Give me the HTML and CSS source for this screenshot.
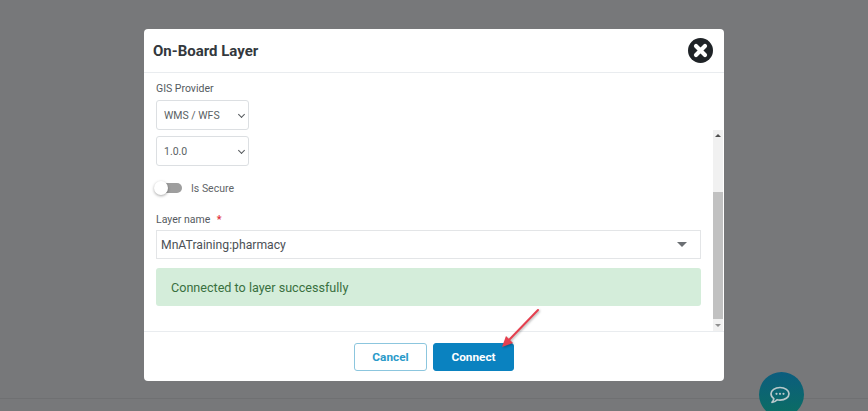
FILE: index.html
```html
<!DOCTYPE html>
<html lang="en">
<head>
  <meta charset="UTF-8">
  <title>On-Board Layer</title>
  <link rel="stylesheet" href="styles.css">
</head>
<body>
  <div class="page-rule"></div>
  <div class="modal">
    <header class="modal-head">
      <h2>On-Board Layer</h2>
      <button class="close" type="button" aria-label="Close">
        <svg width="25" height="25" viewBox="0 0 25 25">
          <circle cx="12.5" cy="12.5" r="12.5" fill="#1f2327"/>
          <path d="M8 8l9 9M17 8l-9 9" stroke="#fff" stroke-width="4.2" stroke-linecap="round"/>
        </svg>
      </button>
    </header>
    <div class="modal-body">
      <label class="field-label">GIS Provider</label>
      <div class="select-wrap">
        <select class="small-select"><option>WMS / WFS</option></select>
      </div>
      <div class="select-wrap">
        <select class="small-select"><option>1.0.0</option></select>
      </div>
      <div class="toggle-row">
        <span class="toggle"></span>
        <span class="toggle-label">Is Secure</span>
      </div>
      <label class="field-label layer-label">Layer name <span class="req">*</span></label>
      <div class="combo">
        <span>MnATraining:pharmacy</span>
        <span class="caret"></span>
      </div>
      <div class="alert">Connected to layer successfully</div>
      <div class="scrollbar">
        <span class="arrow-up"></span>
        <span class="thumb"></span>
        <span class="arrow-down"></span>
      </div>
    </div>
    <footer class="modal-foot">
      <button class="btn btn-cancel" type="button">Cancel</button>
      <button class="btn btn-connect" type="button">Connect</button>
    </footer>
  </div>
  <svg class="pointer" width="44" height="44" viewBox="0 0 44 44">
    <path d="M40 3L11 33" stroke="#e5404f" stroke-width="2" stroke-linecap="round"/>
    <path d="M4 40l4-11 7 7z" fill="#e5404f"/>
  </svg>
  <button class="chat" type="button" aria-label="Chat">
    <svg width="22" height="18" viewBox="0 0 22 18">
      <path d="M11 1.500c5 0 9 2.800 9 6.300s-4 6.300-9 6.300c-1 0-2-.1-2.900-.4C6.800 15.300 5.200 16.300 3 16.300c1-1 1.700-2.200 1.800-3.700C3 11.400 2 9.700 2 7.800 2 4.300 6 1.500 11 1.500z" fill="none" stroke="#b9c8cb" stroke-width="1.700" stroke-linejoin="round"/>
      <circle cx="7.500" cy="7.800" r="1.100" fill="#b9c8cb"/>
      <circle cx="11" cy="7.800" r="1.100" fill="#b9c8cb"/>
      <circle cx="14.500" cy="7.800" r="1.100" fill="#b9c8cb"/>
    </svg>
  </button>
</body>
</html>
```

FILE: styles.css
```css
html, body {
  height: 100%;
}
body {
  margin: 0;
  background: #77787a;
  font-family: Roboto, sans-serif;
  overflow: hidden;
  position: relative;
}
.page-rule {
  position: absolute;
  left: 0;
  right: 0;
  top: 398px;
  border-top: 1px solid #6f7072;
}
.modal {
  position: relative;
  width: 580px;
  height: 352px;
  margin: 29px 0 0 144px;
  background: #fff;
  border-radius: 4px;
  display: flex;
  flex-direction: column;
}
.modal-head {
  height: 43px;
  flex: none;
  display: flex;
  align-items: center;
  justify-content: space-between;
  padding: 0 11px 0 9px;
  border-bottom: 1px solid #e9ecef;
}
.modal-head h2 {
  margin: 0;
  font-size: 15px;
  font-weight: 700;
  color: #33383d;
}
.close {
  border: none;
  background: none;
  padding: 0;
  display: flex;
}
.modal-body {
  position: relative;
  flex: 1;
  padding: 9px 23px 0 12px;
  display: flex;
  flex-direction: column;
  align-items: flex-start;
}
.field-label {
  font-size: 10.500px;
  line-height: 14px;
  color: #555a5f;
}
.select-wrap {
  position: relative;
  margin-top: 4px;
  display: flex;
}
.select-wrap + .select-wrap {
  margin-top: 6px;
}
.select-wrap::after {
  content: "";
  position: absolute;
  right: 5px;
  top: 12px;
  width: 4px;
  height: 4px;
  border-right: 1px solid #55595d;
  border-bottom: 1px solid #55595d;
  transform: rotate(45deg);
}
.small-select {
  width: 93px;
  height: 30px;
  padding: 0 7px;
  appearance: none;
  font-family: Roboto, sans-serif;
  font-size: 10.500px;
  color: #5a5f64;
  background: #fff;
  border: 1px solid #dcdfe2;
  border-radius: 3px;
}
.toggle-row {
  display: flex;
  align-items: center;
  gap: 9px;
  margin-top: 14px;
  height: 16px;
}
.toggle {
  position: relative;
  width: 26px;
  height: 10px;
  border-radius: 5px;
  background: #9e9e9e;
}
.toggle::before {
  content: "";
  position: absolute;
  left: -2px;
  top: -2px;
  width: 14px;
  height: 14px;
  border-radius: 50%;
  background: #fff;
  box-shadow: 0 1px 3px rgba(0,0,0,0.35);
}
.toggle-label {
  font-size: 10.500px;
  color: #5f6468;
}
.layer-label {
  margin-top: 17px;
}
.req {
  color: #e0313c;
  font-weight: 700;
  margin-left: 4px;
}
.combo {
  width: 545px;
  height: 29px;
  box-sizing: border-box;
  margin-top: 3px;
  padding: 0 13px 0 4px;
  display: flex;
  align-items: center;
  justify-content: space-between;
  border: 1px solid #e3e5e7;
  font-size: 12.200px;
  color: #4c5156;
}
.caret {
  width: 0;
  height: 0;
  border-left: 5px solid transparent;
  border-right: 5px solid transparent;
  border-top: 5px solid #6b6f73;
}
.alert {
  width: 545px;
  height: 38px;
  box-sizing: border-box;
  margin-top: 9px;
  padding-left: 15px;
  display: flex;
  align-items: center;
  background: #d4edda;
  border-radius: 3px;
  font-size: 12.600px;
  color: #39703f;
}
.scrollbar {
  position: absolute;
  right: 1px;
  top: 57px;
  bottom: 0;
  width: 10px;
  background: #f1f1f1;
}
.thumb {
  position: absolute;
  left: 0;
  right: 0;
  top: 62px;
  bottom: 12px;
  background: #c1c1c1;
}
.arrow-up, .arrow-down {
  position: absolute;
  left: 2px;
  width: 0;
  height: 0;
  border-left: 3px solid transparent;
  border-right: 3px solid transparent;
}
.arrow-up {
  top: 4px;
  border-bottom: 3px solid #505050;
}
.arrow-down {
  bottom: 4px;
  border-top: 3px solid #909090;
}
.modal-foot {
  height: 50px;
  flex: none;
  box-sizing: border-box;
  border-top: 1px solid #e9ecef;
  display: flex;
  align-items: flex-start;
  justify-content: center;
  gap: 6px;
  padding-top: 11px;
}
.btn {
  height: 28px;
  border-radius: 3px;
  font-family: Roboto, sans-serif;
  font-size: 11.800px;
  font-weight: 700;
  padding: 0;
}
.btn-cancel {
  width: 73px;
  background: #fff;
  border: 1px solid #8cc6de;
  color: #2a9ac9;
}
.btn-connect {
  width: 81px;
  background: #0a82c0;
  border: 1px solid #0a82c0;
  color: #fff;
}
.pointer {
  position: absolute;
  left: 498px;
  top: 307px;
  filter: drop-shadow(1px 1px 1px rgba(0,0,0,0.3));
}
.chat {
  position: absolute;
  left: 759px;
  top: 372px;
  width: 45px;
  height: 45px;
  padding: 0 3px 0 0;
  border: none;
  border-radius: 50%;
  background: linear-gradient(#0c5d7e, #0b6e62);
  display: flex;
  align-items: center;
  justify-content: center;
}
```
